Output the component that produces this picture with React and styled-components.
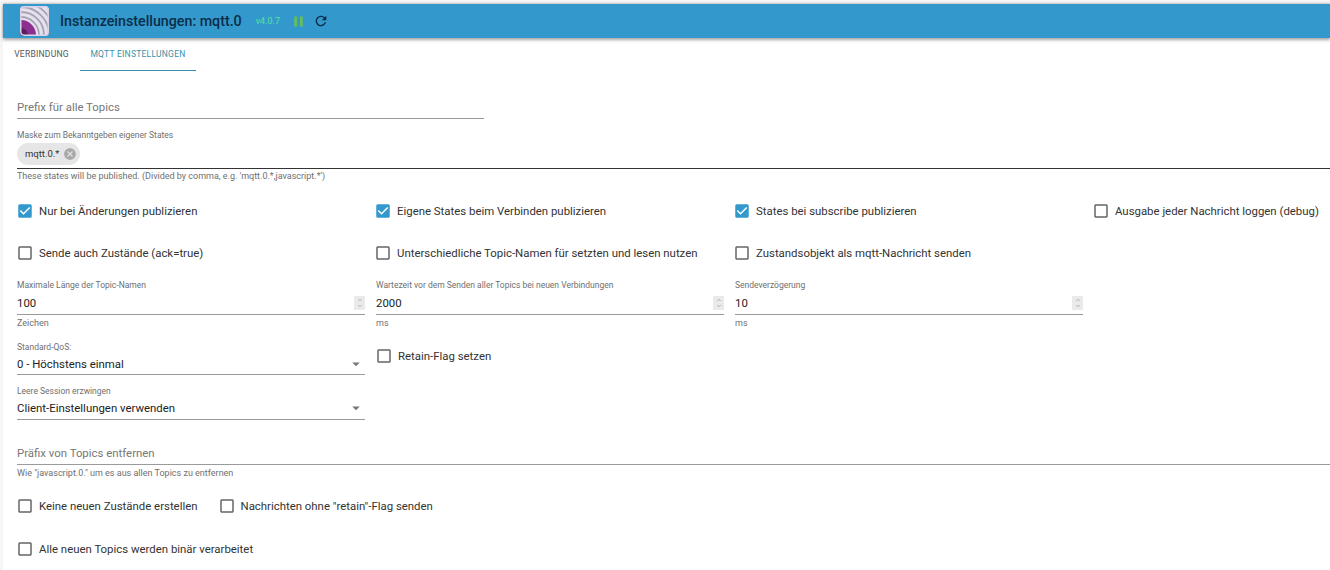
import React from 'react';
import styled, { createGlobalStyle } from 'styled-components';
import { MdCheckBox, MdCheckBoxOutlineBlank, MdCancel, MdPause, MdRefresh, MdArrowDropDown } from 'react-icons/md';
import { LuChevronUp, LuChevronDown } from 'react-icons/lu';

const GlobalStyle = createGlobalStyle`
  html, body { margin: 0; padding: 0; background: #fff; }
  body { font-family: Roboto, "Liberation Sans", sans-serif; color: #212121; overflow: hidden; }
`;

const Page = styled.div`
  width: 1330px;
  height: 570px;
  padding: 4px 0 0 3px;
  box-sizing: border-box;
  overflow: hidden;
  background: #f6f6f6;
`;

const Header = styled.header`
  height: 34px;
  background: #3399cc;
  display: flex;
  align-items: center;
  padding-left: 17px;
  box-shadow: 0 2px 3px rgba(0, 0, 0, 0.35), 0 -1px 2px rgba(0, 0, 0, 0.2);
  position: relative;
`;

const Title = styled.h1`
  margin: 0 0 0 11px;
  font-size: 14.25px;
  font-weight: 500;
  color: #0b2d4a;
  line-height: 34px;
`;

const Version = styled.span`
  margin-left: 14px;
  font-size: 9px;
  color: #55e0a0;
`;

const PauseIcon = styled(MdPause)`
  margin-left: 10px;
  color: #66c05a;
  font-size: 17px;
`;

const RefreshIcon = styled(MdRefresh)`
  margin-left: 6px;
  color: #0b2d4a;
  font-size: 16px;
`;

const Content = styled.div`
  background: #fff;
  height: 532px;
`;

const Tabs = styled.nav`
  display: flex;
  height: 33px;
`;

const Tab = styled.div`
  width: ${p => p.$w}px;
  font-size: 8.5px;
  font-weight: 400;
  letter-spacing: 0.25px;
  text-transform: uppercase;
  text-align: center;
  line-height: 32px;
  color: ${p => (p.$active ? '#3a8fa8' : '#555')};
  border-bottom: ${p => (p.$active ? '1px solid #3a8fa8' : '1px solid transparent')};
  box-sizing: border-box;
`;

const Body = styled.main`
  padding: 0 0 0 14px;
`;

const TextField = styled.div`
  width: ${p => p.$w || '100%'};
  height: ${p => p.$h || 21}px;
  margin-top: ${p => p.$mt || 0}px;
  padding-bottom: ${p => p.$pb ?? 4}px;
  box-sizing: border-box;
  border-bottom: 1px solid ${p => p.$dark ? '#333' : '#9a9a9a'};
  font-size: 11.4px;
  line-height: 14px;
  color: ${p => p.$value ? '#222' : '#777'};
  display: flex;
  align-items: flex-end;
  justify-content: space-between;
`;

const ChipField = styled(TextField)`
  align-items: flex-start;
  padding-top: 3px;
`;

const SmallLabel = styled.div`
  font-size: 8.5px;
  line-height: 10px;
  color: #6f6f6f;
  margin-top: ${p => p.$mt || 0}px;
  white-space: nowrap;
`;

const Hint = styled(SmallLabel)`
  font-size: 9px;
`;

const Chip = styled.span`
  display: inline-flex;
  align-items: center;
  height: 22px;
  padding: 0 3px 0 8px;
  gap: 4px;
  border-radius: 11px;
  background: #e6e6e6;
  font-size: 9.5px;
  color: #333;
`;

const CheckRow = styled.div`
  display: grid;
  grid-template-columns: 358px 359px 359px 359px;
  height: 20px;
  margin-top: ${p => p.$mt || 0}px;
  align-items: center;
`;

const Inline = styled.div`
  display: flex;
  gap: 21px;
  height: 20px;
  align-items: center;
  margin-top: ${p => p.$mt || 0}px;
`;

const CheckLabel = styled.label`
  display: flex;
  align-items: center;
  font-size: 11.4px;
  height: 20px;
  color: #333;
  white-space: nowrap;
  gap: 5px;
  margin-left: -1px;
`;

const FieldGrid = styled.div`
  display: grid;
  grid-template-columns: repeat(3, 348px);
  column-gap: 11px;
  margin-top: ${p => p.$mt || 0}px;
`;

const FieldCell = styled.div``;

const Spinner = styled.span`
  width: 11px;
  height: 14px;
  margin-bottom: 0;
  background: #eaeaea;
  color: #777;
  display: flex;
  flex-direction: column;
  align-items: center;
  justify-content: center;
  font-size: 6px;
`;

const ArrowSlot = styled.span`
  display: flex;
  height: 14px;
  align-items: center;
  color: #777;
  font-size: 18px;
`;

const Lower = styled.div`
  display: grid;
  grid-template-columns: 348px auto;
  column-gap: 11px;
  margin-top: 14px;
`;

const RetainCell = styled.div`
  margin-top: 4px;
`;

const Check = ({ on, label }) => (
  <CheckLabel>
    {on ? <MdCheckBox size={18} color="#3399cc" /> : <MdCheckBoxOutlineBlank size={18} color="#666" />}
    {label}
  </CheckLabel>
);

const NumberField = ({ label, value, unit }) => (
  <FieldCell>
    <SmallLabel>{label}</SmallLabel>
    <TextField $h={25} $value>
      {value}
      <Spinner><LuChevronUp /><LuChevronDown /></Spinner>
    </TextField>
    <Hint $mt={3}>{unit}</Hint>
  </FieldCell>
);

const SelectField = ({ label, value, mt, h, pb }) => (
  <FieldCell>
    <SmallLabel $mt={mt}>{label}</SmallLabel>
    <TextField $h={h} $pb={pb} $value>
      {value}
      <ArrowSlot><MdArrowDropDown /></ArrowSlot>
    </TextField>
  </FieldCell>
);

const Logo = () => (
  <svg width="29" height="30" viewBox="0 0 29 30">
    <defs>
      <clipPath id="logo-clip"><rect width="29" height="30" rx="4" /></clipPath>
    </defs>
    <g clipPath="url(#logo-clip)">
      <rect width="29" height="30" fill="#e6e2ec" />
      <g fill="none" stroke="#a9a1b8" strokeWidth="1.8">
        <circle cx="1" cy="29" r="18" />
        <circle cx="1" cy="29" r="23" />
        <circle cx="1" cy="29" r="28" />
        <circle cx="1" cy="29" r="33" />
      </g>
      <circle cx="1" cy="29" r="15" fill="#8d2f90" />
      <circle cx="1" cy="29" r="7" fill="#5a1f60" />
      <rect x="0.75" y="0.75" width="27.5" height="28.5" rx="3.5" fill="none" stroke="#d9d4ea" strokeWidth="1.5" />
    </g>
  </svg>
);

export default function App() {
  return (
    <Page>
      <GlobalStyle />
      <Header>
        <Logo />
        <Title>Instanzeinstellungen: mqtt.0</Title>
        <Version>v4.0.7</Version>
        <PauseIcon />
        <RefreshIcon />
      </Header>
      <Content>
        <Tabs>
          <Tab $w={77}>Verbindung</Tab>
          <Tab $w={116} $active>MQTT Einstellungen</Tab>
        </Tabs>
        <Body>
          <TextField $w="467px" $h={26} $mt={22}>Prefix für alle Topics</TextField>
          <SmallLabel $mt={11}>Maske zum Bekanntgeben eigener States</SmallLabel>
          <ChipField $h={29} $pb={0} $dark><Chip>mqtt.0.*<MdCancel size={14} color="#a8a8a8" /></Chip></ChipField>
          <Hint $mt={2}>These states will be published. (Divided by comma, e.g. 'mqtt.0.*,javascript.*')</Hint>
          <CheckRow $mt={20}>
            <Check on label="Nur bei Änderungen publizieren" />
            <Check on label="Eigene States beim Verbinden publizieren" />
            <Check on label="States bei subscribe publizieren" />
            <Check label="Ausgabe jeder Nachricht loggen (debug)" />
          </CheckRow>
          <CheckRow $mt={22}>
            <Check label="Sende auch Zustände (ack=true)" />
            <Check label="Unterschiedliche Topic-Namen für setzten und lesen nutzen" />
            <Check label="Zustandsobjekt als mqtt-Nachricht senden" />
          </CheckRow>
          <FieldGrid $mt={17}>
            <NumberField label="Maximale Länge der Topic-Namen" value="100" unit="Zeichen" />
            <NumberField label="Wartezeit vor dem Senden aller Topics bei neuen Verbindungen" value="2000" unit="ms" />
            <NumberField label="Sendeverzögerung" value="10" unit="ms" />
          </FieldGrid>
          <Lower>
            <FieldCell>
              <SelectField label="Standard-QoS:" value="0 - Höchstens einmal" h={23} pb={3} />
              <SelectField label="Leere Session erzwingen" value="Client-Einstellungen verwenden" mt={11} h={24} />
            </FieldCell>
            <RetainCell><Check label="Retain-Flag setzen" /></RetainCell>
          </Lower>
          <TextField $h={25} $mt={20}>Präfix von Topics entfernen</TextField>
          <Hint $mt={3}>Wie "javascript.0." um es aus allen Topics zu entfernen</Hint>
          <Inline $mt={18}>
            <Check label="Keine neuen Zustände erstellen" />
            <Check label={'Nachrichten ohne "retain"-Flag senden'} />
          </Inline>
          <Inline $mt={23}>
            <Check label="Alle neuen Topics werden binär verarbeitet" />
          </Inline>
        </Body>
      </Content>
    </Page>
  );
}
